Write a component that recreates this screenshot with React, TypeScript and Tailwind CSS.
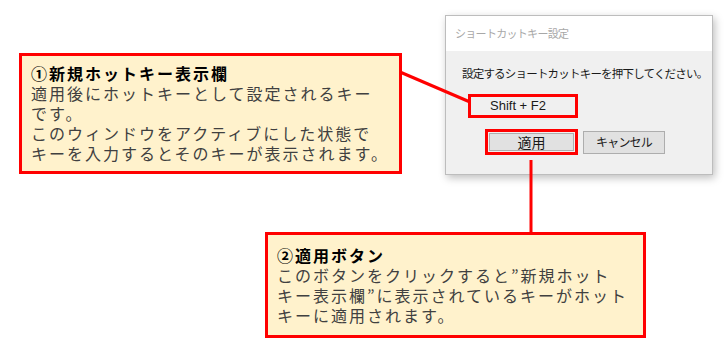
const jp = "font-['Noto_Sans_CJK_JP','Noto_Sans',sans-serif]";

function Callout({
  title,
  lines,
  className,
}: {
  title: string;
  lines: string[];
  className: string;
}) {
  return (
    <div
      className={`absolute border-[3px] border-[#ff0000] bg-[#fff2cc] ${jp} ${className}`}
    >
      <p className="text-[16px] font-bold leading-[20px] tracking-[2px] text-black">{title}</p>
      {lines.map((l) => (
        <p key={l} className="text-[16px] leading-[20px] tracking-[2px] text-[#404040]">
          {l}
        </p>
      ))}
    </div>
  );
}

function Dialog() {
  return (
    <div className="absolute left-[445px] top-[15px] flex h-[160px] w-[268px] flex-col border border-[#bdbdbd] bg-[#f0f0f0] shadow-[2px_3px_8px_rgba(0,0,0,0.25)]">
      {/* Title bar */}
      <div className="flex h-[35px] items-center bg-white pl-[9px]">
        <span className={`text-[11px] tracking-[-0.7px] text-[#a8a8a8] ${jp}`}>
          ショートカットキー設定
        </span>
      </div>
      <div className="flex flex-col pl-[16px] pt-[14px]">
        <p className={`text-[11.5px] leading-[16px] tracking-[-0.8px] text-[#1a1a1a] ${jp}`}>
          設定するショートカットキーを押下してください。
        </p>
        <div className="ml-[6px] mt-[13px] flex h-[24px] w-[110px] items-center border-[3px] border-[#ff0000] pl-[19px]">
          <span className="font-['Liberation_Sans',sans-serif] text-[13px] text-[#1a1a1a]">Shift + F2</span>
        </div>
        <div className="mt-[11px] flex items-center gap-[5px] pl-[23px]">
          <div className="flex h-[26px] w-[93px] items-center justify-center border-[3px] border-[#ff0000] p-[1px]">
            <div className={`flex h-full w-full items-center justify-center border border-[#adadad] bg-[#e1e1e1] text-[14px] text-[#1a1a1a] ${jp}`}>
              適用
            </div>
          </div>
          <div className={`flex h-[23px] w-[82px] items-center justify-center border border-[#adadad] bg-[#e1e1e1] text-[12px] tracking-[-0.8px] text-[#1a1a1a] ${jp}`}>
            キャンセル
          </div>
        </div>
      </div>
    </div>
  );
}

export default function App() {
  return (
    <div className="relative h-[351px] w-[726px] overflow-hidden bg-white">
      <Dialog />

      {/* Connector lines */}
      <svg className="absolute left-0 top-0" width="726" height="351">
        <line x1="400" y1="72" x2="470" y2="102" stroke="#ff0000" strokeWidth="3" />
        <line x1="531" y1="160" x2="531" y2="233" stroke="#ff0000" strokeWidth="3" />
      </svg>

      <Callout
        className="left-[19px] top-[53px] h-[121px] w-[383px] pl-[9px] pt-[7px]"
        title="①新規ホットキー表示欄"
        lines={[
          "適用後にホットキーとして設定されるキー",
          "です。",
          "このウィンドウをアクティブにした状態で",
          "キーを入力するとそのキーが表示されます。",
        ]}
      />

      <Callout
        className="left-[265px] top-[232px] h-[106px] w-[381px] pl-[9px] pt-[10px]"
        title="②適用ボタン"
        lines={[
          "このボタンをクリックすると”新規ホット",
          "キー表示欄”に表示されているキーがホット",
          "キーに適用されます。",
        ]}
      />
    </div>
  );
}
